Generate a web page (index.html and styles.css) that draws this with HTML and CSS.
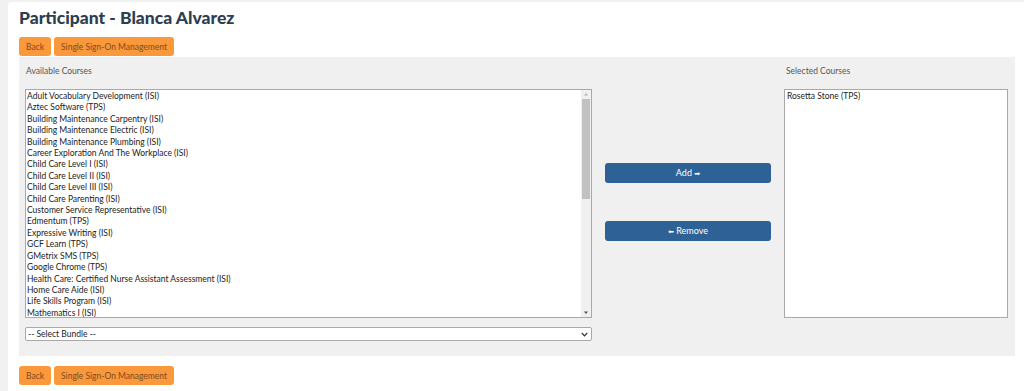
FILE: index.html
```html
<!DOCTYPE html>
<html lang="en">
<head>
<meta charset="utf-8">
<title>Participant - Blanca Alvarez</title>
<link rel="stylesheet" href="styles.css">
</head>
<body>
<div class="card">
  <h1 class="title">Participant - Blanca Alvarez</h1>
  <div class="actions">
    <button class="btn-orange">Back</button>
    <button class="btn-orange">Single Sign-On Management</button>
  </div>
  <div class="panel">
    <div class="label">Available Courses</div>
    <div class="label"></div>
    <div class="label">Selected Courses</div>

    <div class="left-col">
      <div class="listbox available">
        <div class="opts">
          <div class="opt">Adult Vocabulary Development (ISI)</div>
          <div class="opt">Aztec Software (TPS)</div>
          <div class="opt">Building Maintenance Carpentry (ISI)</div>
          <div class="opt">Building Maintenance Electric (ISI)</div>
          <div class="opt">Building Maintenance Plumbing (ISI)</div>
          <div class="opt">Career Exploration And The Workplace (ISI)</div>
          <div class="opt">Child Care Level I (ISI)</div>
          <div class="opt">Child Care Level II (ISI)</div>
          <div class="opt">Child Care Level III (ISI)</div>
          <div class="opt">Child Care Parenting (ISI)</div>
          <div class="opt">Customer Service Representative (ISI)</div>
          <div class="opt">Edmentum (TPS)</div>
          <div class="opt">Expressive Writing (ISI)</div>
          <div class="opt">GCF Learn (TPS)</div>
          <div class="opt">GMetrix SMS (TPS)</div>
          <div class="opt">Google Chrome (TPS)</div>
          <div class="opt">Health Care: Certified Nurse Assistant Assessment (ISI)</div>
          <div class="opt">Home Care Aide (ISI)</div>
          <div class="opt">Life Skills Program (ISI)</div>
          <div class="opt">Mathematics I (ISI)</div>
        </div>
        <div class="scrollbar" aria-hidden="true">
          <svg class="sb-arrow" width="10" height="8" viewBox="0 0 10 8"><path d="M3 5.5 L5 3 L7 5.5 Z" fill="#b4b4b4"/></svg>
          <div class="sb-track"><div class="sb-thumb"></div></div>
          <svg class="sb-arrow" width="10" height="8" viewBox="0 0 10 8"><path d="M3 2.5 L5 5 L7 2.5 Z" fill="#505050"/></svg>
        </div>
      </div>
      <div class="bundle">
        <span>-- Select Bundle --</span>
        <svg class="chev" width="7" height="5" viewBox="0 0 7 5"><path d="M0.8 1 L3.5 3.8 L6.2 1" fill="none" stroke="#333" stroke-width="1.2"/></svg>
      </div>
    </div>

    <div class="mid-col">
      <button class="btn-blue">Add <span class="arr">&#x27A1;</span></button>
      <button class="btn-blue"><span class="arr flip">&#x27A1;</span> Remove</button>
    </div>

    <div class="right-col">
      <div class="listbox selected">
        <div class="opts">
          <div class="opt">Rosetta Stone (TPS)</div>
        </div>
      </div>
    </div>
  </div>
  <div class="actions bottom">
    <button class="btn-orange">Back</button>
    <button class="btn-orange">Single Sign-On Management</button>
  </div>
</div>
</body>
</html>
```

FILE: styles.css
```css
* { box-sizing: border-box; }

html, body {
  margin: 0;
  padding: 0;
  background: #f1f1f1;
  font-family: "Lato", "Open Sans", sans-serif;
  overflow: hidden;
}

.card {
  margin: 2px 0 0 8px;
  background: #ffffff;
  border-top-left-radius: 4px;
  padding: 5px 9px 20px 11px;
  min-height: 400px;
}

.title {
  margin: 0;
  font-size: 17.5px;
  line-height: 21px;
  font-weight: 900;
  color: #2c3e50;
}

.actions {
  display: flex;
  gap: 3px;
  margin-top: 9px;
}

.actions.bottom {
  margin-top: 10px;
}

.btn-orange {
  height: 19px;
  padding: 0 7px;
  border: none;
  border-radius: 3px;
  background: #f9993c;
  color: #7e4a20;
  font-family: inherit;
  font-size: 8.5px;
}

.panel {
  margin-top: 1px;
  background: #f0f0f0;
  padding: 8px 7px 15px 6px;
  display: grid;
  grid-template-columns: 567px 166px 224px;
  column-gap: 13px;
  grid-template-rows: 24px auto;
}

.label {
  font-size: 8.5px;
  line-height: 12px;
  color: #555555;
  padding-left: 1px;
}

.label:nth-child(3) {
  padding-left: 2px;
}

.listbox {
  height: 229px;
  background: #ffffff;
  border: 1px solid #a9a9a9;
  font-size: 8.5px;
  line-height: 11.4px;
  color: #222;
  display: flex;
  overflow: hidden;
}

.opts {
  flex: 1;
  padding: 1px 1px 0;
  overflow: hidden;
}

.selected .opts {
  padding-left: 2px;
}

.opt {
  white-space: nowrap;
}

.scrollbar {
  width: 10px;
  background: #f0f0f0;
  display: flex;
  flex-direction: column;
}

.sb-arrow {
  display: block;
  flex: none;
}

.sb-track {
  flex: 1;
  padding: 1px 1px 0;
}

.sb-thumb {
  height: 100px;
  background: #c1c1c1;
}

.bundle {
  margin-top: 9px;
  height: 14px;
  border: 1px solid #a9a9a9;
  border-radius: 2px;
  background: #ffffff;
  display: flex;
  align-items: center;
  justify-content: space-between;
  padding: 0 3px 0 2px;
  font-size: 8.5px;
  color: #222;
}

.mid-col {
  height: 229px;
  display: flex;
  flex-direction: column;
  justify-content: center;
  gap: 38px;
  padding-bottom: 4px;
}

.btn-blue {
  height: 20px;
  width: 100%;
  border: none;
  border-radius: 3px;
  background: #2e6195;
  color: #ffffff;
  font-family: inherit;
  font-size: 9px;
}

.arr {
  font-family: "DejaVu Sans", sans-serif;
  font-size: 7px;
  display: inline-block;
}

.arr.flip {
  transform: scaleX(-1);
}
```
